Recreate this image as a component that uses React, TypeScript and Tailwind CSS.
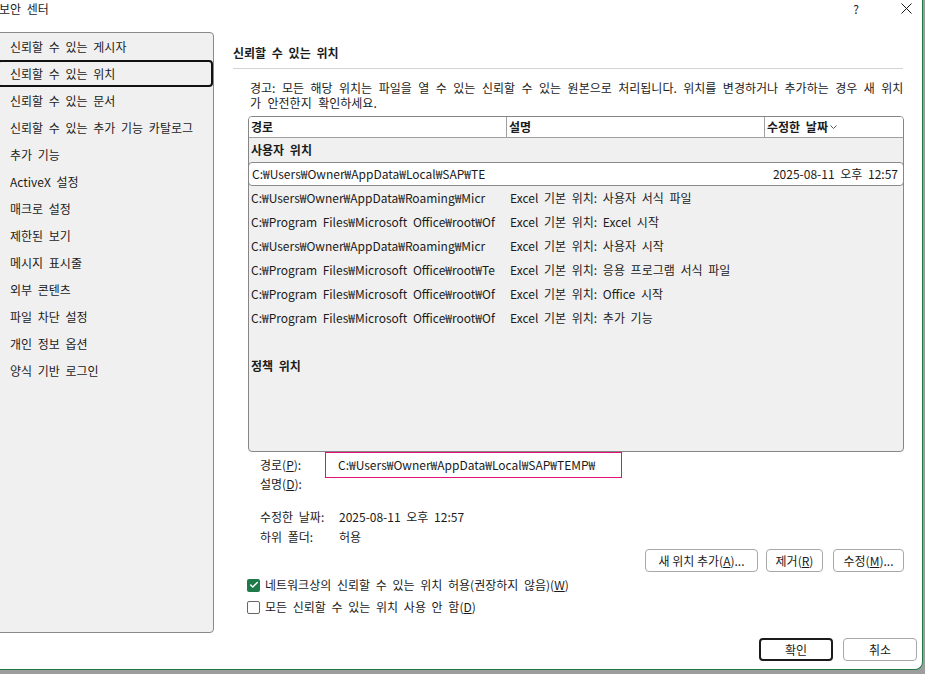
import { Check } from "lucide-react";

const font = { fontFamily: '"Noto Sans CJK KR", "Noto Sans", sans-serif' };

const menu = [
  "신뢰할 수 있는 게시자",
  "신뢰할 수 있는 위치",
  "신뢰할 수 있는 문서",
  "신뢰할 수 있는 추가 기능 카탈로그",
  "추가 기능",
  "ActiveX 설정",
  "매크로 설정",
  "제한된 보기",
  "메시지 표시줄",
  "외부 콘텐츠",
  "파일 차단 설정",
  "개인 정보 옵션",
  "양식 기반 로그인",
];

const rows = [
  ["C:₩Users₩Owner₩AppData₩Roaming₩Micr", "Excel 기본 위치: 사용자 서식 파일"],
  ["C:₩Program Files₩Microsoft Office₩root₩Of", "Excel 기본 위치: Excel 시작"],
  ["C:₩Users₩Owner₩AppData₩Roaming₩Micr", "Excel 기본 위치: 사용자 시작"],
  ["C:₩Program Files₩Microsoft Office₩root₩Te", "Excel 기본 위치: 응용 프로그램 서식 파일"],
  ["C:₩Program Files₩Microsoft Office₩root₩Of", "Excel 기본 위치: Office 시작"],
  ["C:₩Program Files₩Microsoft Office₩root₩Of", "Excel 기본 위치: 추가 기능"],
];

function Btn({ children, w, primary }: { children: React.ReactNode; w: string; primary?: boolean }) {
  return (
    <button
      className={
        "h-[23px] flex items-center justify-center bg-white rounded-[4px] text-[12px] text-[#1b1b1b] " +
        w +
        (primary ? " border-2 border-[#1b1b1b]" : " border border-[#a8a8a8]")
      }
    >
      {children}
    </button>
  );
}

export default function App() {
  return (
    <div className="w-[925px] h-[674px] bg-[#9d9d9d] overflow-hidden [word-spacing:3px]" style={font}>
      <div className="w-[923px] h-[670px] bg-white border-r border-b border-[#1f7a4a] rounded-br-[8px] flex flex-col text-[12px] text-[#1b1b1b] overflow-hidden">
        {/* title bar */}
        <div className="h-[32px] flex items-start">
          <span className="leading-[17px] -ml-[1px]">보안 센터</span>
          <span className="ml-auto mr-[42px] leading-[17px]">?</span>
          <svg width="11" height="11" viewBox="0 0 11 11" className="mt-[3px] mr-[10px]">
            <path d="M0.5 0.5 L10.5 10.5 M10.5 0.5 L0.5 10.5" stroke="#1b1b1b" strokeWidth="1" />
          </svg>
        </div>

        <div className="h-[601px] flex">
          {/* sidebar */}
          <div className="w-[218px] -ml-[4px] bg-[#f0f0f0] border border-[#8a8a8a] rounded-[4px]">
            {menu.map((m, i) => (
              <div
                key={m}
                className={
                  "h-[27px] flex items-center whitespace-nowrap " +
                  (i === 1 ? "border-2 border-[#111] rounded-[4px] pl-[11px]" : "pl-[13px]")
                }
              >
                {m}
              </div>
            ))}
          </div>

          {/* main */}
          <div className="flex-1 pl-[19px] pr-[18px] flex flex-col">
            <div className="mt-[12px] pb-[7px] leading-[17px] font-bold border-b border-[#d4d4d4] mr-[1px]">
              신뢰할 수 있는 위치
            </div>
            <div className="mt-[11px] ml-[17px] leading-[15px] whitespace-nowrap [word-spacing:3.8px]">
              <div>
                경고: 모든 해당 위치는 파일을 열 수 있는 신뢰할 수 있는 원본으로 처리됩니다. 위치를 변경하거나 추가하는 경우 새 위치
              </div>
              <div>가 안전한지 확인하세요.</div>
            </div>

            {/* table */}
            <div className="mt-[6px] ml-[15px] h-[336px] bg-[#f0f0f0] border border-[#858585] rounded-[4px] overflow-hidden">
              <div className="h-[21px] bg-white border-b border-[#a0a0a0] flex font-bold">
                <div className="w-[258px] border-r border-[#a0a0a0] pl-[2px] flex items-center">경로</div>
                <div className="w-[258px] border-r border-[#a0a0a0] pl-[2px] flex items-center">설명</div>
                <div className="flex-1 pl-[2px] flex items-center">
                  수정한 날짜
                  <svg width="7" height="5" viewBox="0 0 7 5" className="ml-[2px] mt-[1px]">
                    <path d="M0.5 0.5 L3.5 3.5 L6.5 0.5" fill="none" stroke="#555" strokeWidth="1" />
                  </svg>
                </div>
              </div>
              <div className="h-[24px] flex items-center pl-[2px] font-bold">사용자 위치</div>
              <div className="h-[24px] -mx-[1px] bg-white border border-[#8a8a8a] rounded-[4px] flex items-center pl-[3px] pr-[5px]">
                <span>C:₩Users₩Owner₩AppData₩Local₩SAP₩TE</span>
                <span className="ml-auto">2025-08-11 오후 12:57</span>
              </div>
              {rows.map(([p, d], i) => (
                <div key={i} className="h-[24px] flex items-center">
                  <div className="w-[259px] pl-[2px] whitespace-nowrap overflow-hidden">{p}</div>
                  <div className="pl-[2px] whitespace-nowrap">{d}</div>
                </div>
              ))}
              <div className="h-[24px]" />
              <div className="h-[24px] flex items-center pl-[2px] font-bold">정책 위치</div>
            </div>

            {/* details */}
            <div className="ml-[27px] flex items-center h-[26px]">
              <span className="w-[65px]">
                경로(<u>P</u>):
              </span>
              <div className="w-[297px] h-[26px] border border-[#e3127b] flex items-center pl-[12px]">
                C:₩Users₩Owner₩AppData₩Local₩SAP₩TEMP₩
              </div>
            </div>
            <div className="ml-[27px] h-[16px] -mt-[2px] leading-[16px]">
              설명(<u>D</u>):
            </div>
            <div className="ml-[27px] mt-[15px] h-[20px] flex items-center">
              <span className="w-[79px]">수정한 날짜:</span>
              <span>2025-08-11 오후 12:57</span>
            </div>
            <div className="ml-[27px] h-[20px] flex items-center">
              <span className="w-[79px]">하위 폴더:</span>
              <span>허용</span>
            </div>

            <div className="mt-[2px] flex justify-end">
              <div className="mr-[8px]">
                <Btn w="w-[113px]">
                  새 위치 추가(<u>A</u>)...
                </Btn>
              </div>
              <div className="mr-[10px]">
                <Btn w="w-[57px]">
                  제거(<u>R</u>)
                </Btn>
              </div>
              <Btn w="w-[71px]">
                수정(<u>M</u>)...
              </Btn>
            </div>

            <div className="mt-[6px] ml-[14px] flex flex-col gap-[8px]">
              <label className="flex items-center h-[14px] gap-[5px]">
                <span className="w-[13px] h-[13px] rounded-[2px] bg-[#1f7a4a] flex items-center justify-center">
                  <Check className="w-[10px] h-[10px] text-white" strokeWidth={3.5} />
                </span>
                <span>
                  네트워크상의 신뢰할 수 있는 위치 허용(권장하지 않음)(<u>W</u>)
                </span>
              </label>
              <label className="flex items-center h-[14px] gap-[5px]">
                <span className="w-[13px] h-[13px] rounded-[2px] bg-white border border-[#666]" />
                <span>
                  모든 신뢰할 수 있는 위치 사용 안 함(<u>D</u>)
                </span>
              </label>
            </div>
          </div>
        </div>

        {/* footer */}
        <div className="flex justify-end gap-[10px] pr-[5px] mt-[5px]">
          <Btn w="w-[74px]" primary>
            확인
          </Btn>
          <Btn w="w-[74px]">취소</Btn>
        </div>
      </div>
    </div>
  );
}
